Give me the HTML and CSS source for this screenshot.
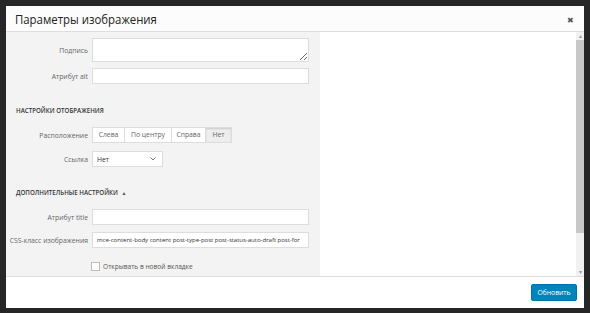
FILE: index.html
```html
<!DOCTYPE html>
<html lang="ru">
<head>
    <meta charset="UTF-8">
    <title>Параметры изображения</title>
    <link rel="stylesheet" href="styles.css">
</head>
<body>
    <div class="modal">
        <div class="modal-header">
            <h1>Параметры изображения</h1>
            <span class="close">&#10006;</span>
        </div>
        <div class="modal-body">
            <div class="settings">
                <div class="row row-caption">
                    <label>Подпись</label>
                    <textarea></textarea>
                </div>
                <div class="row">
                    <label>Атрибут alt</label>
                    <div class="field"></div>
                </div>
                <div class="sep"></div>
                <h2 class="section">Настройки отображения</h2>
                <div class="row row-align">
                    <label>Расположение</label>
                    <div class="btn-group">
                        <span class="btn">Слева</span>
                        <span class="btn">По центру</span>
                        <span class="btn">Справа</span>
                        <span class="btn active">Нет</span>
                    </div>
                </div>
                <div class="row row-link">
                    <label>Ссылка</label>
                    <div class="select">
                        <span>Нет</span>
                        <svg width="6" height="4" viewBox="0 0 6 4"><path d="M0.5 0.5 L3 3 L5.5 0.5" fill="none" stroke="#777" stroke-width="1"/></svg>
                    </div>
                </div>
                <div class="sep"></div>
                <h2 class="section">Дополнительные настройки <span class="arrow">&#9650;</span></h2>
                <div class="row row-title">
                    <label>Атрибут title</label>
                    <div class="field"></div>
                </div>
                <div class="row">
                    <label>CSS-класс изображения</label>
                    <div class="field field-css">mce-content-body content post-type-post post-status-auto-draft post-for</div>
                </div>
                <div class="row row-check">
                    <label></label>
                    <div class="check"><span class="box"></span>Открывать в новой вкладке</div>
                </div>
            </div>
            <div class="preview">
                <div class="scrollbar">
                    <span class="sb-arrow">&#9652;</span>
                    <div class="sb-thumb"></div>
                    <span class="sb-arrow sb-down">&#9662;</span>
                </div>
            </div>
        </div>
        <div class="modal-footer">
            <button>Обновить</button>
        </div>
    </div>
</body>
</html>
```

FILE: styles.css
```css
* {
    box-sizing: border-box;
}
body {
    margin: 0;
    background-color: #262626;
    font-family: "Open Sans", sans-serif;
    height: 313px;
    overflow: hidden;
}
.modal {
    margin: 6px 0 0 6px;
    width: 578px;
    height: 302px;
    background: #fff;
    display: flex;
    flex-direction: column;
}
.modal-header {
    height: 26px;
    background: #fcfcfc;
    border-bottom: 1px solid #dedede;
    display: flex;
    align-items: center;
    justify-content: space-between;
    padding: 0 10px 0 9px;
}
.modal-header h1 {
    margin: 0;
    font-size: 11.4px;
    font-weight: 400;
    color: #222;
    transform: scaleY(1.18);
    transform-origin: left center;
}
.close {
    font-size: 8px;
    color: #555;
    margin-top: 1px;
}
.modal-body {
    height: 244px;
    display: flex;
}
.settings {
    width: 314px;
    background: #f3f3f3;
    padding: 6px 11px 0 9px;
    display: flex;
    flex-direction: column;
}
.row {
    display: flex;
    align-items: center;
    margin-bottom: 6px;
}
.row label {
    width: 73px;
    margin-right: 4px;
    display: flex;
    justify-content: flex-end;
    white-space: nowrap;
    font-size: 6.8px;
    color: #666;
    flex-shrink: 0;
}
textarea, .field {
    width: 217px;
    border: 1px solid #ddd;
    background: #fff;
    margin: 0;
}
textarea {
    height: 24px;
    resize: vertical;
    display: block;
}
.field {
    height: 16px;
    font-size: 6.4px;
    color: #333;
    padding: 0 4px;
    line-height: 14px;
    white-space: nowrap;
    overflow: hidden;
}
.field-css {
    font-size: 6.1px;
    letter-spacing: -0.05px;
}
.sep {
    height: 1px;
    background: #ddd;
    margin: 5px 0 0 0;
}
.section {
    margin: 0;
    height: 32px;
    line-height: 32px;
    font-size: 6.2px;
    font-weight: 600;
    color: #333;
    text-transform: uppercase;
    padding-left: 1px;
}
.arrow {
    font-size: 5px;
    margin-left: 2px;
    color: #555;
}
.row-align {
    margin: 0 0 8px 0;
}
.btn-group {
    display: flex;
    height: 16px;
    border: 1px solid #ddd;
    background: #fff;
}
.btn {
    font-size: 6.8px;
    color: #666;
    line-height: 14px;
    text-align: center;
    border-right: 1px solid #ddd;
}
.btn:nth-child(1) { width: 32px; }
.btn:nth-child(2) { width: 47px; }
.btn:nth-child(3) { width: 34px; }
.btn:nth-child(4) { width: 25px; border-right: none; }
.btn.active {
    background: #eee;
    box-shadow: inset 0 1px 2px rgba(0, 0, 0, 0.15);
}
.row-link {
    margin-bottom: 5px;
}
.select {
    width: 71px;
    height: 16px;
    border: 1px solid #ddd;
    background: #fff;
    display: flex;
    align-items: center;
    justify-content: space-between;
    padding: 0 6px 0 4px;
    font-size: 6.8px;
    color: #333;
}
.row-title {
    margin-bottom: 7px;
}
.row-check {
    margin-top: 8px;
}
.check {
    display: flex;
    align-items: center;
    font-size: 6.6px;
    color: #555;
}
.box {
    width: 9px;
    height: 9px;
    border: 1px solid #bbb;
    background: #fff;
    margin-right: 3px;
    margin-left: -1px;
}
.preview {
    flex: 1;
    display: flex;
    justify-content: flex-end;
    background: #fff;
}
.scrollbar {
    width: 8px;
    background: #f1f1f1;
    display: flex;
    flex-direction: column;
    align-items: center;
}
.sb-arrow {
    font-size: 6px;
    color: #999;
    height: 8px;
    line-height: 8px;
}
.sb-thumb {
    width: 8px;
    height: 193px;
    background: #c8c8c8;
}
.sb-down {
    margin-top: auto;
}
.modal-footer {
    flex: 1;
    border-top: 1px solid #ddd;
    display: flex;
    align-items: center;
    justify-content: flex-end;
    padding: 0 7px 1px 0;
}
button {
    width: 46px;
    height: 17px;
    background: #0085ba;
    border: 1px solid #0073aa;
    border-radius: 2px;
    color: #fff;
    font-family: "Open Sans", sans-serif;
    font-size: 6.8px;
    padding: 0;
}
```
